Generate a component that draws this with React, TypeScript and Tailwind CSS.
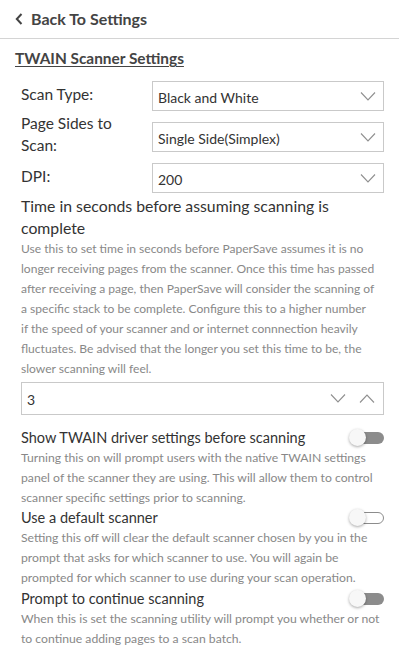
const font = { fontFamily: "Lato, 'Open Sans', sans-serif" };

function Chevron({ up = false }: { up?: boolean }) {
  return (
    <svg width="16" height="9" viewBox="0 0 16 9" fill="none" stroke="#8f8f8f" strokeWidth="1.1">
      {up ? <path d="M1 8.5 L8 1 L15 8.5" /> : <path d="M1 0.5 L8 8 L15 0.5" />}
    </svg>
  );
}

function Select({ value }: { value: string }) {
  return (
    <div className="flex items-center justify-between h-[30px] border border-[#c9c9c9] pl-[5px] pr-[7px] text-[14px] text-[#333]">
      <span className="pt-[2px]">{value}</span>
      <Chevron />
    </div>
  );
}

function Toggle({ filled }: { filled: boolean }) {
  return (
    <div className="relative w-[35px] h-[16px] shrink-0">
      <div
        className={
          "absolute left-[8px] right-0 top-[2px] h-[12px] rounded-r-full " +
          (filled ? "bg-[#8c8c8c]" : "border border-[#8c8c8c] bg-white")
        }
      />
      <div className="absolute left-0 top-[-1px] w-[17px] h-[17px] rounded-full bg-[#f7f7f7] shadow-[0_1px_3px_rgba(0,0,0,0.35)]" />
    </div>
  );
}

function ToggleSetting({ title, desc, filled }: { title: string; desc: string; filled: boolean }) {
  return (
    <div>
      <div className="flex items-center justify-between h-[20px]">
        <span className="text-[14.5px] text-[#333]">{title}</span>
        <Toggle filled={filled} />
      </div>
      <p className="text-[12.2px] leading-[20px] text-[#888]">{desc}</p>
    </div>
  );
}

export default function App() {
  return (
    <div className="w-[399px] h-[664px] bg-white overflow-hidden" style={font}>
      <div className="flex items-center gap-[8px] h-[39px] pl-[15px] border-b border-[#d4d4d4] text-[#444]">
        <svg width="8" height="12" viewBox="0 0 8 12" fill="none" stroke="#444" strokeWidth="2">
          <path d="M6.5 1 L1.8 6 L6.5 11" />
        </svg>
        <span className="text-[16px] font-bold">Back To Settings</span>
      </div>

      <div className="px-[15px] pt-[9px]">
        <h1 className="text-[15.4px] leading-[20px] font-bold text-[#444] underline underline-offset-2">
          TWAIN Scanner Settings
        </h1>

        <div className="pl-[6px] pt-[13px]">
          <div className="grid grid-cols-[131px_1fr] auto-rows-[30px] gap-y-[11px] text-[15.5px] text-[#333]">
            <div className="pt-[2px]">Scan Type:</div>
            <Select value="Black and White" />
            <div className="leading-[22px] -mt-[10px]">
              Page Sides to
              <br />
              Scan:
            </div>
            <Select value="Single Side(Simplex)" />
            <div className="pt-[2px]">DPI:</div>
            <Select value="200" />
          </div>

          <div className="mt-[2px] text-[15.8px] leading-[22px] text-[#333]">
            Time in seconds before assuming scanning is complete
          </div>
          <p className="text-[12.05px] leading-[20px] text-[#888]">
            Use this to set time in seconds before PaperSave assumes it is no longer receiving pages from the scanner.
            Once this time has passed after receiving a page, then PaperSave will consider the scanning of
            <br />
            a specific stack to be complete. Configure this to a higher number
            <br />
            if the speed of your scanner and or internet connnection heavily
            <br />
            fluctuates. Be advised that the longer you set this time to be, the slower scanning will feel.
          </p>

          <div className="mt-[3px] flex items-center justify-between h-[33px] border border-[#c9c9c9] pl-[5px] pr-[8px] text-[14px] text-[#333]">
            <span className="pt-[2px]">3</span>
            <div className="flex items-center gap-[13px]">
              <Chevron />
              <Chevron up />
            </div>
          </div>

          <div className="mt-[13px] flex flex-col">
            <ToggleSetting
              title="Show TWAIN driver settings before scanning"
              filled
              desc="Turning this on will prompt users with the native TWAIN settings panel of the scanner they are using. This will allow them to control scanner specific settings prior to scanning."
            />
            <ToggleSetting
              title="Use a default scanner"
              filled={false}
              desc="Setting this off will clear the default scanner chosen by you in the prompt that asks for which scanner to use. You will again be prompted for which scanner to use during your scan operation."
            />
            <div className="mt-[1px]">
              <ToggleSetting
                title="Prompt to continue scanning"
                filled
                desc="When this is set the scanning utility will prompt you whether or not to continue adding pages to a scan batch."
              />
            </div>
          </div>
        </div>
      </div>
    </div>
  );
}
